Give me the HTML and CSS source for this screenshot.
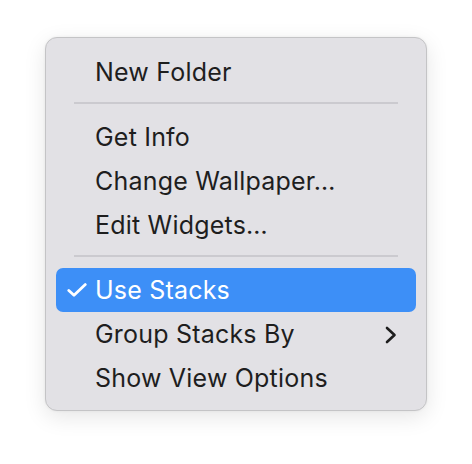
FILE: index.html
```html
<!DOCTYPE html>
<html>
<head>
<meta charset="utf-8">
<link rel="stylesheet" href="styles.css">
</head>
<body>
<div class="page">
  <div class="menu">
    <div class="item">New Folder</div>
    <div class="sep"></div>
    <div class="item">Get Info</div>
    <div class="item">Change Wallpaper…</div>
    <div class="item">Edit Widgets…</div>
    <div class="sep"></div>
    <div class="item selected">
      <svg class="check" width="20" height="14" viewBox="0 0 20 14"><path d="M1.8 7.5 L7 12.3 L18.3 1.6" fill="none" stroke="#fff" stroke-width="2.8" stroke-linecap="round" stroke-linejoin="round"/></svg>
      Use Stacks
    </div>
    <div class="item">Group Stacks By
      <svg class="chev" width="12" height="18" viewBox="0 0 12 18"><path d="M2 2 L9.5 9 L2 16" fill="none" stroke="#1e1e1e" stroke-width="2.6" stroke-linecap="round" stroke-linejoin="round"/></svg>
    </div>
    <div class="item">Show View Options</div>
  </div>
</div>
</body>
</html>
```
FILE: styles.css
```css
html, body {
  margin: 0;
  padding: 0;
  background: #ffffff;
}
.page {
  width: 472px;
  height: 464px;
  padding: 37px 0 0 45px;
  box-sizing: border-box;
}
.menu {
  width: 382px;
  box-sizing: border-box;
  background: #e2e1e5;
  border: 1px solid #c4c4c6;
  border-radius: 12px;
  padding: 12px 10px 10px 10px;
  box-shadow: 0 6px 22px rgba(0,0,0,0.10), 0 0 3px rgba(0,0,0,0.06);
  font-family: "Inter", "Liberation Sans", sans-serif;
  font-size: 25px;
  color: #1e1e1e;
}
.item {
  position: relative;
  height: 44px;
  line-height: 45px;
  padding-left: 39px;
  border-radius: 7px;
  letter-spacing: 0.2px;
}
.selected {
  background: #3d8ff7;
  color: #ffffff;
}
.check {
  position: absolute;
  left: 11px;
  top: 15px;
}
.chev {
  position: absolute;
  right: 19px;
  top: 14px;
}
.sep {
  height: 2px;
  background: #cbcacf;
  margin: 8px 18px 11px 18px;
}
```
